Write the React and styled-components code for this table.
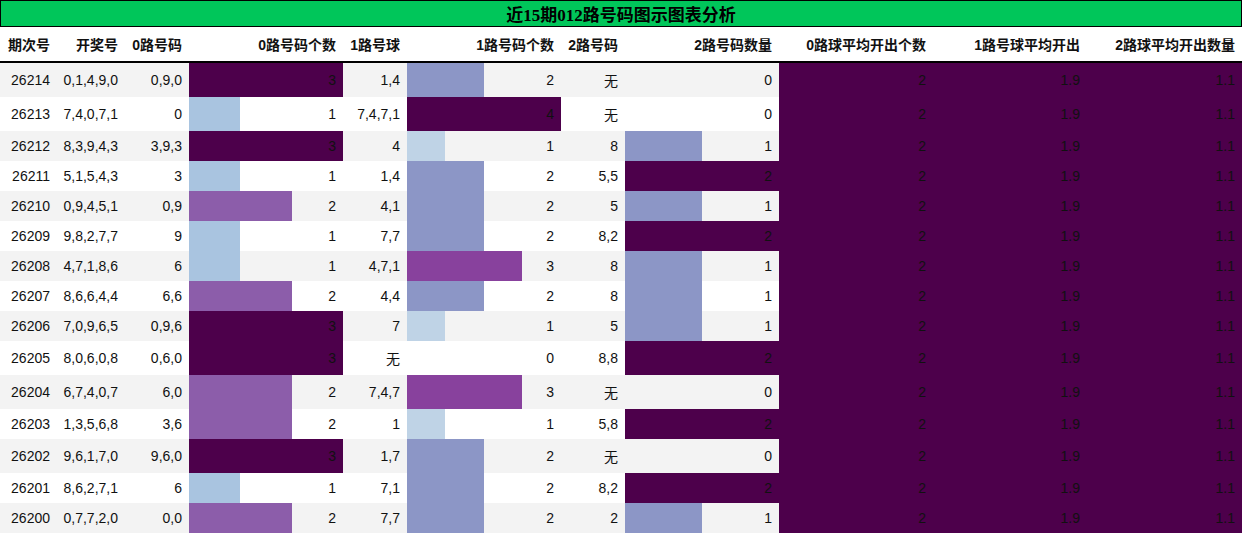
import React from 'react'
import styled, {createGlobalStyle} from "styled-components";

const COLS = '57px 68px 64px 154px 64px 154px 64px 154px 154px 154px 155px';

const rows = [
  ['26214', '0,1,4,9,0', '0,9,0', 3, '1,4', 2, '无', 0],
  ['26213', '7,4,0,7,1', '0', 1, '7,4,7,1', 4, '无', 0],
  ['26212', '8,3,9,4,3', '3,9,3', 3, '4', 1, '8', 1],
  ['26211', '5,1,5,4,3', '3', 1, '1,4', 2, '5,5', 2],
  ['26210', '0,9,4,5,1', '0,9', 2, '4,1', 2, '5', 1],
  ['26209', '9,8,2,7,7', '9', 1, '7,7', 2, '8,2', 2],
  ['26208', '4,7,1,8,6', '6', 1, '4,7,1', 3, '8', 1],
  ['26207', '8,6,6,4,4', '6,6', 2, '4,4', 2, '8', 1],
  ['26206', '7,0,9,6,5', '0,9,6', 3, '7', 1, '5', 1],
  ['26205', '8,0,6,0,8', '0,6,0', 3, '无', 0, '8,8', 2],
  ['26204', '6,7,4,0,7', '6,0', 2, '7,4,7', 3, '无', 0],
  ['26203', '1,3,5,6,8', '3,6', 2, '1', 1, '5,8', 2],
  ['26202', '9,6,1,7,0', '9,6,0', 3, '1,7', 2, '无', 0],
  ['26201', '8,6,2,7,1', '6', 1, '7,1', 2, '8,2', 2],
  ['26200', '0,7,7,2,0', '0,0', 2, '7,7', 2, '2', 1],
];

// colour per value for each count column
const scale0 = ['transparent', '#a9c4e0', '#8c5daa', '#4d004b'];
const scale1 = ['transparent', '#bfd3e6', '#8c96c6', '#88419d', '#4d004b'];
const scale2 = ['transparent', '#8c96c6', '#4d004b'];

const headers = ['期次号', '开奖号', '0路号码', '0路号码个数', '1路号球', '1路号码个数', '2路号码', '2路号码数量', '0路球平均开出个数', '1路号球平均开出', '2路球平均开出数量'];

const GlobalStyle = createGlobalStyle`
  body {
    margin: 0;
    background: #fff;
    font-family: "Liberation Sans", "Noto Sans CJK SC", sans-serif;
    color: #111;
  }
`;

const Title = styled.div`
  height: 25px;
  border: 1px solid #000;
  background-color: #00c65a;
  display: flex;
  align-items: center;
  justify-content: center;
  font-family: "Liberation Serif", "Noto Sans CJK SC", serif;
  font-weight: bold;
  font-size: 17px;
  color: #000;
`;

const HeadRow = styled.div`
  display: grid;
  grid-template-columns: ${COLS};
  height: 34px;
  border-bottom: 2px solid #000;
  .cell {
    display: flex;
    align-items: center;
    justify-content: flex-end;
    padding-right: 7px;
    font-weight: bold;
    font-size: 14px;
    white-space: nowrap;
  }
`;

const Row = styled.div`
  display: grid;
  grid-template-columns: ${COLS};
  height: ${p => p.$tall ? 34 : 30}px;
  background-color: ${p => p.$striped ? '#f3f3f3' : '#fff'};
`;

const Cell = styled.div`
  display: flex;
  align-items: center;
  justify-content: flex-end;
  padding-right: 7px;
  font-size: 14px;
  white-space: nowrap;
  background: ${p => p.$dark ? '#4d004b' : 'transparent'};
`;

const BarCell = styled(Cell)`
  background: ${p => `linear-gradient(to right, ${p.$color} 0, ${p.$color} ${p.$pct}%, transparent ${p.$pct}%)`};
`;

export default function App() {
  return (
    <>
      <GlobalStyle />
      <Title>近15期012路号码图示图表分析</Title>
      <HeadRow>
        {headers.map(h => <div className="cell" key={h}>{h}</div>)}
      </HeadRow>
      {rows.map((r, i) => {
        const tall = r.some(v => v === '无');
        return (
          <Row key={r[0]} $striped={i % 2 === 0} $tall={tall}>
            <Cell>{r[0]}</Cell>
            <Cell>{r[1]}</Cell>
            <Cell>{r[2]}</Cell>
            <BarCell $color={scale0[r[3]]} $pct={r[3] / 3 * 100}>{r[3]}</BarCell>
            <Cell>{r[4]}</Cell>
            <BarCell $color={scale1[r[5]]} $pct={r[5] / 4 * 100}>{r[5]}</BarCell>
            <Cell>{r[6]}</Cell>
            <BarCell $color={scale2[r[7]]} $pct={r[7] / 2 * 100}>{r[7]}</BarCell>
            <Cell $dark>2</Cell>
            <Cell $dark>1.9</Cell>
            <Cell $dark>1.1</Cell>
          </Row>
        );
      })}
    </>
  )
}
